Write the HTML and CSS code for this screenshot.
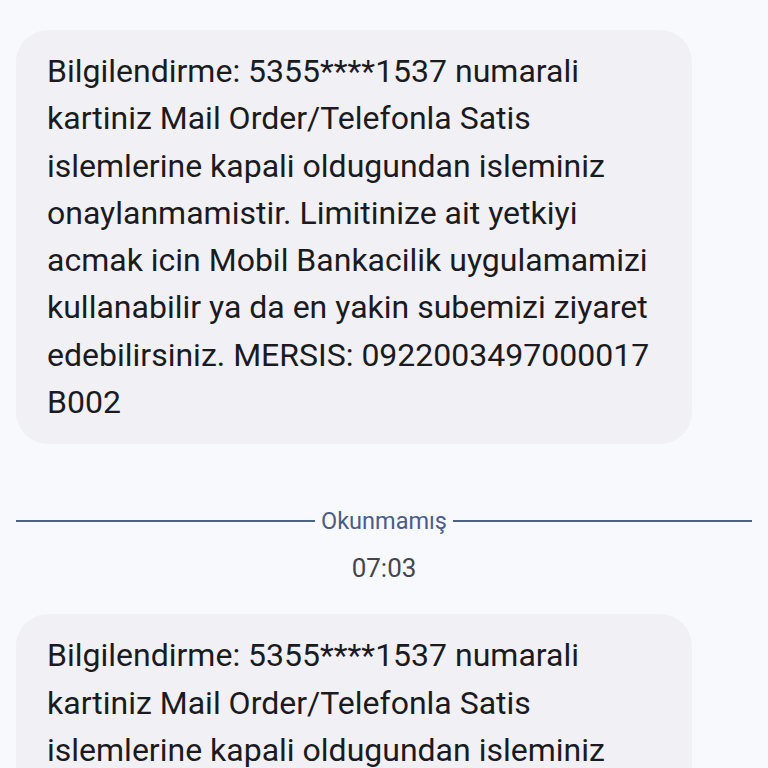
FILE: index.html
```html
<!DOCTYPE html>
<html lang="tr">
<head>
<meta charset="utf-8">
<link rel="stylesheet" href="styles.css">
</head>
<body>
<div class="thread">
  <div class="bubble">Bilgilendirme: 5355****1537 numarali kartiniz Mail Order/Telefonla Satis islemlerine kapali oldugundan isleminiz onaylanmamistir. Limitinize ait yetkiyi acmak icin Mobil Bankacilik uygulamamizi kullanabilir ya da en yakin subemizi ziyaret edebilirsiniz. MERSIS: 0922003497000017 B002</div>
  <div class="divider"><span class="rule"></span><span class="label">Okunmamış</span><span class="rule"></span></div>
  <div class="time">07:03</div>
  <div class="bubble">Bilgilendirme: 5355****1537 numarali kartiniz Mail Order/Telefonla Satis islemlerine kapali oldugundan isleminiz onaylanmamistir. Limitinize ait yetkiyi acmak icin Mobil Bankacilik uygulamamizi kullanabilir ya da en yakin subemizi ziyaret edebilirsiniz. MERSIS: 0922003497000017 B002</div>
</div>
</body>
</html>
```
FILE: styles.css
```css
html, body {
  margin: 0;
  padding: 0;
  background: #f8f9fd;
  height: 768px;
  overflow: hidden;
}
.thread {
  display: flex;
  flex-direction: column;
  padding: 30px 16px 0 16px;
  font-family: Roboto, "Noto Sans", sans-serif;
}
.bubble {
  width: 676px;
  box-sizing: border-box;
  background: #f1f0f5;
  border-radius: 32px;
  padding: 18px 20px 18px 31px;
  font-size: 32px;
  line-height: 47.3px;
  color: #1b1b1f;
}
.divider {
  display: flex;
  align-items: center;
  margin-top: 63px;
  gap: 6px;
}
.rule {
  flex: 1;
  height: 2px;
  background: #50608c;
}
.label {
  font-size: 23.5px;
  color: #4c5c88;
  line-height: 28px;
}
.time {
  text-align: center;
  font-size: 26px;
  color: #45464a;
  margin-top: 19px;
  line-height: 28px;
}
.time + .bubble {
  margin-top: 32px;
}
```
